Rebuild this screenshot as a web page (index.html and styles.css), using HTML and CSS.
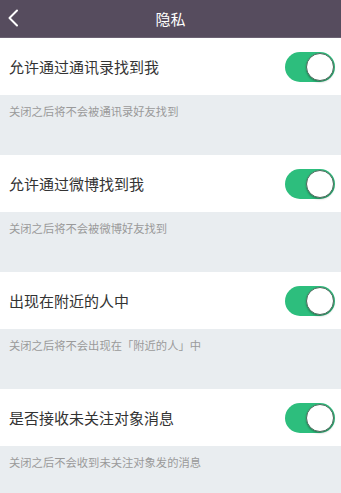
FILE: index.html
```html
<!DOCTYPE html>
<html lang="zh-CN">
<head>
  <meta charset="UTF-8">
  <meta name="viewport" content="width=device-width, initial-scale=1.0">
  <title>隐私</title>
  <link rel="stylesheet" href="styles.css">
</head>
<body>
  <div class="header">
    <svg class="back" width="12" height="18" viewBox="0 0 12 18">
      <polyline points="10,1.5 2.5,9 10,16.5" fill="none" stroke="#fff" stroke-width="2" stroke-linecap="round" stroke-linejoin="round"/>
    </svg>
    <h1>隐私</h1>
  </div>

  <div class="group">
    <div class="row">
      <span class="title">允许通过通讯录找到我</span>
      <span class="switch on"><span class="knob"></span></span>
    </div>
    <p class="note">关闭之后将不会被通讯录好友找到</p>
  </div>

  <div class="group">
    <div class="row">
      <span class="title">允许通过微博找到我</span>
      <span class="switch on"><span class="knob"></span></span>
    </div>
    <p class="note">关闭之后将不会被微博好友找到</p>
  </div>

  <div class="group">
    <div class="row">
      <span class="title">出现在附近的人中</span>
      <span class="switch on"><span class="knob"></span></span>
    </div>
    <p class="note">关闭之后将不会出现在「附近的人」中</p>
  </div>

  <div class="group">
    <div class="row">
      <span class="title">是否接收未关注对象消息</span>
      <span class="switch on"><span class="knob"></span></span>
    </div>
    <p class="note">关闭之后不会收到未关注对象发的消息</p>
  </div>
</body>
</html>
```

FILE: styles.css
```css
body {
  margin: 0;
  background-color: #e9edf0;
  font-family: "Noto Sans CJK SC", "Noto Sans", sans-serif;
}
.header {
  height: 37px;
  background-color: #564c5e;
  border-bottom: 1px solid #6b6273;
  display: flex;
  align-items: center;
  justify-content: center;
  position: relative;
}
.header h1 {
  margin: 0;
  color: #fff;
  font-size: 15px;
  font-weight: normal;
}
.back {
  position: absolute;
  left: 7px;
  top: 9px;
}
.row {
  height: 57px;
  background-color: #fff;
  display: flex;
  align-items: center;
  justify-content: space-between;
  padding: 0 6px 0 9px;
}
.title {
  font-size: 15px;
  color: #333;
}
.note {
  margin: 0;
  height: 60px;
  box-sizing: border-box;
  padding: 8px 0 0 9px;
  font-size: 11.3px;
  color: #9a9a9a;
}
.switch {
  width: 50px;
  height: 30px;
  border-radius: 15px;
  background-color: #2dbe7d;
  display: flex;
  align-items: center;
  justify-content: flex-end;
  box-sizing: border-box;
  padding: 1px;
}
.knob {
  width: 28px;
  height: 28px;
  border-radius: 50%;
  background-color: #fff;
  box-sizing: border-box;
  border: 1px solid #4d6a5c;
  box-shadow: 0 1px 2px rgba(0, 0, 0, 0.3);
}
```
